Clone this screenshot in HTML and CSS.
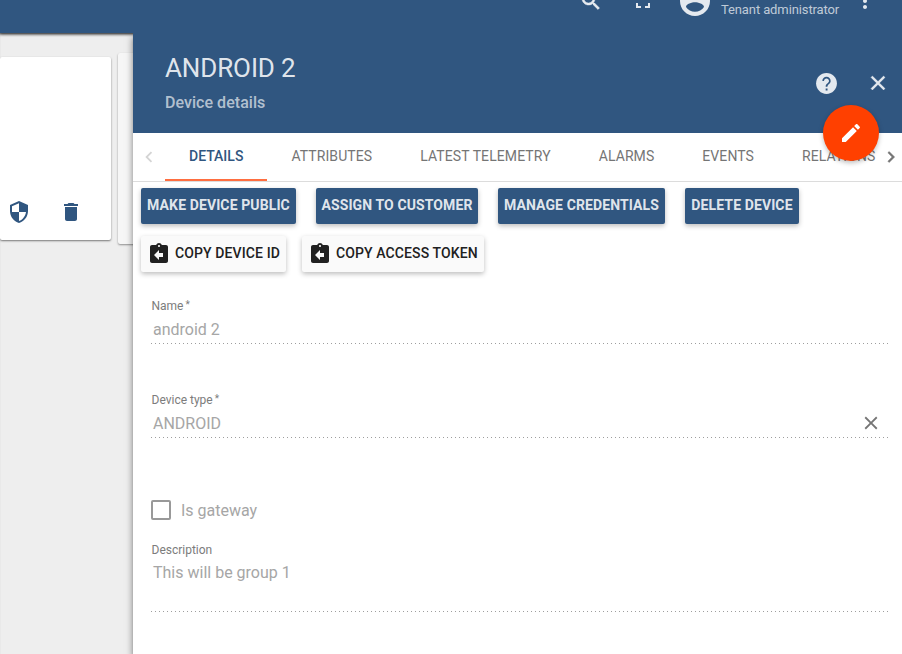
FILE: index.html
```html
<!DOCTYPE html>
<html lang="en">
<head>
<meta charset="utf-8">
<title>Device details</title>
<link rel="stylesheet" href="styles.css">
</head>
<body>
<header class="toolbar">
  <svg class="icon search" viewBox="0 0 24 24"><path d="M15.5 14h-.79l-.28-.27C15.41 12.59 16 11.11 16 9.5 16 5.91 13.09 3 9.5 3S3 5.91 3 9.5 5.91 16 9.5 16c1.61 0 3.09-.59 4.23-1.57l.27.28v.79l5 4.99L20.49 19l-4.99-5zm-6 0C7.01 14 5 11.99 5 9.5S7.01 5 9.5 5 14 7.01 14 9.5 11.99 14 9.5 14z"/></svg>
  <svg class="icon fullscreen" viewBox="0 0 24 24"><path d="M7 14H5v5h5v-2H7v-3zm-2-4h2V7h3V5H5v5zm12 7h-3v2h5v-5h-2v3zM14 5v2h3v3h2V5h-5z"/></svg>
  <svg class="avatar" viewBox="0 0 24 24"><path d="M12 2C6.48 2 2 6.48 2 12s4.48 10 10 10 10-4.48 10-10S17.52 2 12 2zm0 3c1.66 0 3 1.34 3 3s-1.34 3-3 3-3-1.34-3-3 1.34-3 3-3zm0 14.2c-2.500 0-4.710-1.280-6-3.220.03-1.990 4-3.080 6-3.080 1.990 0 5.970 1.090 6 3.080-1.290 1.940-3.500 3.220-6 3.220z"/></svg>
  <div class="role">Tenant administrator</div>
  <svg class="icon" viewBox="0 0 24 24"><path d="M12 8c1.100 0 2-.9 2-2s-.9-2-2-2-2 .9-2 2 .9 2 2 2zm0 2c-1.100 0-2 .9-2 2s.9 2 2 2 2-.9 2-2-.9-2-2-2zm0 6c-1.100 0-2 .9-2 2s.9 2 2 2 2-.9 2-2-.9-2-2-2z"/></svg>
</header>
<div class="content">
  <main class="devices">
    <article class="card">
      <svg class="icon" viewBox="0 0 24 24"><path d="M12 1L3 5v6c0 5.550 3.840 10.740 9 12 5.160-1.260 9-6.450 9-12V5l-9-4zm0 10.990h7c-.53 4.120-3.280 7.790-7 8.940V12H5V6.300l7-3.110v8.800z"/></svg>
      <svg class="icon" viewBox="0 0 24 24"><path d="M6 19c0 1.100.9 2 2 2h8c1.100 0 2-.9 2-2V7H6v12zM19 4h-3.500l-1-1h-5l-1 1H5v2h14V4z"/></svg>
    </article>
    <article class="card next"></article>
  </main>
  <section class="panel">
    <header class="panel-head">
      <div class="heading">
        <h1>ANDROID 2</h1>
        <p>Device details</p>
      </div>
      <svg class="icon help" viewBox="0 0 24 24"><path d="M12 2C6.480 2 2 6.480 2 12s4.480 10 10 10 10-4.480 10-10S17.520 2 12 2z"/><path class="mark" d="M11.200 18.600h1.800v-1.800h-1.800v1.800zM12 5.600c-2.210 0-4 1.690-4 3.900h1.600c0-1.300 1.100-2.400 2.400-2.400s2.400 1.100 2.400 2.400c0 2.100-3.200 2.300-3.200 5.500h1.700c0-2.350 3.100-2.800 3.100-5.500 0-2.210-1.790-3.900-4-3.900z"/></svg>
      <svg class="icon close" viewBox="0 0 24 24"><path d="M19 6.410L17.590 5 12 10.590 6.410 5 5 6.410 10.590 12 5 17.590 6.410 19 12 13.410 17.590 19 19 17.590 13.410 12z"/></svg>
      <button class="fab" aria-label="Edit"><svg class="icon" viewBox="0 0 24 24"><path d="M3 17.250V21h3.750L17.810 9.940l-3.750-3.750L3 17.250zM20.710 7.040c.39-.39.39-1.020 0-1.410l-2.340-2.340c-.39-.39-1.020-.39-1.410 0l-1.830 1.830 3.750 3.750 1.830-1.830z"/></svg></button>
    </header>
    <nav class="tabs">
      <svg class="arrow off" viewBox="0 0 24 24"><path d="M15.410 7.410L14 6l-6 6 6 6 1.410-1.410L10.830 12z"/></svg>
      <div class="tab-list">
        <span class="tab active">DETAILS</span>
        <span class="tab">ATTRIBUTES</span>
        <span class="tab">LATEST TELEMETRY</span>
        <span class="tab">ALARMS</span>
        <span class="tab">EVENTS</span>
        <span class="tab last">RELATIONS</span>
      </div>
      <svg class="arrow forward" viewBox="0 0 24 24"><path d="M10 6L8.590 7.410 13.170 12l-4.580 4.590L10 18l6-6z"/></svg>
    </nav>
    <div class="actions">
      <button class="btn primary public">MAKE DEVICE PUBLIC</button>
      <button class="btn primary assign">ASSIGN TO CUSTOMER</button>
      <button class="btn primary manage">MANAGE CREDENTIALS</button>
      <button class="btn primary delete">DELETE DEVICE</button>
    </div>
    <div class="actions copy">
      <button class="btn"><svg class="icon" viewBox="0 0 24 24"><path d="M19 3h-4.180C14.400 1.840 13.300 1 12 1s-2.400.84-2.820 2H5c-1.100 0-2 .9-2 2v14c0 1.100.9 2 2 2h14c1.100 0 2-.9 2-2V5c0-1.100-.9-2-2-2zm-7 0c.55 0 1 .45 1 1s-.45 1-1 1-1-.45-1-1 .45-1 1-1zm4 12h-4v3l-5-5 5-5v3h4v4z"/></svg><span>COPY DEVICE ID</span></button>
      <button class="btn"><svg class="icon" viewBox="0 0 24 24"><path d="M19 3h-4.180C14.400 1.840 13.300 1 12 1s-2.400.84-2.820 2H5c-1.100 0-2 .9-2 2v14c0 1.100.9 2 2 2h14c1.100 0 2-.9 2-2V5c0-1.100-.9-2-2-2zm-7 0c.55 0 1 .45 1 1s-.45 1-1 1-1-.45-1-1 .45-1 1-1zm4 12h-4v3l-5-5 5-5v3h4v4z"/></svg><span>COPY ACCESS TOKEN</span></button>
    </div>
    <form class="form">
      <div class="field">
        <label>Name<sup>*</sup></label>
        <div class="value">android 2</div>
      </div>
      <div class="field type">
        <label>Device type<sup>*</sup></label>
        <div class="value">ANDROID<svg class="clear" viewBox="0 0 24 24"><path d="M19 6.410L17.590 5 12 10.590 6.410 5 5 6.410 10.590 12 5 17.590 6.410 19 12 13.410 17.590 19 19 17.590 13.410 12z"/></svg></div>
      </div>
      <div class="check"><span class="box"></span>Is gateway</div>
      <div class="field description">
        <label>Description</label>
        <div class="value">This will be group 1</div>
      </div>
    </form>
  </section>
</div>
</body>
</html>
```
FILE: styles.css
```css
* { box-sizing: border-box; }

body {
  margin: 0;
  height: 654px;
  overflow: hidden;
  background: #eee;
  font-family: Roboto, "Liberation Sans", sans-serif;
}

svg { display: block; flex: none; fill: currentColor; }
.icon { width: 24px; height: 24px; }

.toolbar {
  display: flex;
  align-items: center;
  justify-content: flex-end;
  height: 64px;
  margin-top: -31px;
  padding-right: 25px;
  background: #305680;
  color: rgba(255, 255, 255, 0.87);
  box-shadow: 0 1px 3px rgba(0, 0, 0, 0.6);
}
.search { margin-right: 28px; stroke: currentColor; stroke-width: 0.5; }
.fullscreen { margin-right: 22px; }
.avatar { width: 36px; height: 36px; margin-right: 8px; }
.role {
  width: 132px;
  padding-top: 17px;
  font-size: 13px;
  line-height: 16px;
  letter-spacing: -0.11px;
  color: rgba(255, 255, 255, 0.7);
}

.content { display: flex; height: 621px; }

.devices {
  display: flex;
  gap: 7px;
  width: 133px;
  flex: none;
  overflow: hidden;
  padding-top: 24px;
  box-shadow: inset 0 3px 3px -2px rgba(0, 0, 0, 0.6);
}
.card {
  display: flex;
  align-items: flex-end;
  gap: 28px;
  flex: none;
  width: 111px;
  height: 183px;
  padding: 0 0 16px 7px;
  border-radius: 2px;
  background: #fff;
  color: #305680;
  box-shadow: 0 1px 2px rgba(0, 0, 0, 0.5);
}
.next {
  height: 191px;
  margin-top: -4px;
  background: #f6f6f6;
  box-shadow: 0 1px 2px rgba(0, 0, 0, 0.4);
}

.panel {
  position: relative;
  flex: 1;
  min-width: 0;
  background: #fff;
  box-shadow: 0 4px 7px rgba(0, 0, 0, 0.5);
  clip-path: inset(0 0 0 -12px);
}
.panel-head {
  position: relative;
  display: flex;
  height: 100px;
  padding: 0 12px 0 32px;
  background: #305680;
  color: rgba(255, 255, 255, 0.87);
}
.close { margin-top: 38px; stroke: currentColor; stroke-width: 0.4; }
.heading { flex: 1; }
.heading h1 {
  margin: 20px 0 0;
  font-size: 26px;
  line-height: 30px;
  font-weight: 400;
  letter-spacing: -0.12px;
}
.heading p {
  margin: 10px 0 0;
  font-size: 16px;
  line-height: 20px;
  font-weight: 500;
  letter-spacing: 0.04px;
  color: rgba(255, 255, 255, 0.65);
}
.help { width: 25px; height: 25px; margin: 37.5px 27px 0 0; }
.mark { fill: #305680; }
.fab {
  position: absolute;
  right: 23px;
  bottom: -28px;
  z-index: 1;
  display: flex;
  align-items: center;
  justify-content: center;
  width: 56px;
  height: 56px;
  padding: 0;
  border: 0;
  border-radius: 50%;
  background: #ff4000;
  color: #fff;
  box-shadow: 0 2px 5px rgba(0, 0, 0, 0.26);
}

.tabs {
  display: flex;
  align-items: center;
  height: 49px;
  border-bottom: 1px solid #dcdcdc;
  color: #757575;
}
.arrow { width: 22px; height: 22px; margin: 0 5px; }
.off { color: #d4d4d4; }
.forward { margin: 0; stroke: currentColor; stroke-width: 0.5; }
.tab-list { display: flex; flex: 1; min-width: 0; }
.tab {
  flex: none;
  height: 48px;
  padding: 0 24px;
  font-size: 14px;
  line-height: 47px;
  font-weight: 400;
  letter-spacing: 0.09px;
}
.active {
  width: 102.4px;
  color: #305680;
  font-weight: 500;
  letter-spacing: 0;
  border-bottom: 2px solid #ff6e40;
}
.last { padding-right: 0; }

.actions { display: flex; padding: 6px 8px 0; }
.btn {
  display: flex;
  align-items: center;
  justify-content: center;
  gap: 4px;
  height: 36px;
  padding: 0 6px;
  border: 0;
  border-radius: 2px;
  background: #fafafa;
  color: #212121;
  font: 500 14px/34px Roboto, "Liberation Sans", sans-serif;
  letter-spacing: 0.11px;
  white-space: nowrap;
  box-shadow: 0 2px 5px rgba(0, 0, 0, 0.26);
}
.btn span { padding-bottom: 2px; }
.primary {
  padding: 0 0 2px;
  background: #305680;
  color: rgba(255, 255, 255, 0.87);
  font-weight: 700;
}
.public { width: 155px; margin-right: 20px; }
.assign { width: 162px; margin-right: 20px; }
.manage { width: 167px; margin-right: 20px; }
.delete { width: 114px; }
.copy { gap: 16px; padding-top: 12px; }

.form { padding: 27px 14px 0 18px; }
.field { height: 45px; }
.field, .check { color: #a6a6a6; }
.field label {
  display: block;
  padding-left: 0.5px;
  font-size: 12px;
  line-height: 14px;
  letter-spacing: 0;
  color: #7c7c7c;
}
.field sup { margin-left: 2px; font-size: 10px; line-height: 0; vertical-align: 2px; }
.value {
  display: flex;
  align-items: center;
  justify-content: space-between;
  height: 31px;
  padding: 2px 6px 0 2px;
  font-size: 16px;
  background: repeating-linear-gradient(to right, #9e9e9e 0 1px, transparent 1px 4px) bottom / 100% 1px no-repeat;
}
.clear { width: 22px; height: 22px; margin-bottom: 2px; color: #757575; }
.type { margin-top: 49px; }
.check {
  display: flex;
  align-items: center;
  gap: 10px;
  height: 20px;
  margin-top: 62px;
  font-size: 16px;
  letter-spacing: 0;
}
.box { width: 20px; height: 20px; border: 2px solid #999; border-radius: 2px; }
.description { margin-top: 23px; }
.description .value { height: 55px; align-items: flex-start; padding-top: 6px; }
```
